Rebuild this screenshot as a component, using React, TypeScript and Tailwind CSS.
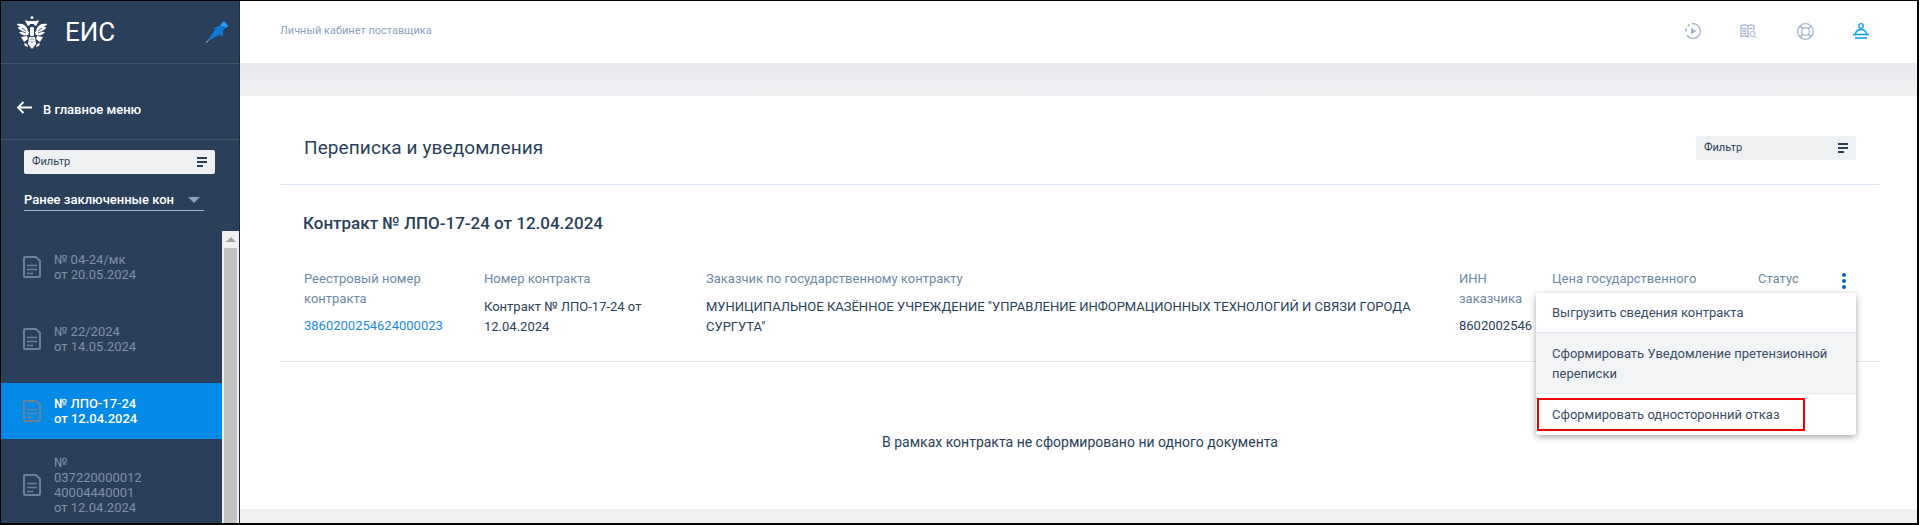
import React from "react";

const EagleLogo = () => (
  <svg width="32" height="33" viewBox="0 0 32 33" fill="#fff">
    <circle cx="16" cy="1.500" r="1.500" />
    <path d="M11 5h10l-1.500 3h-7z" />
    <path d="M1 8c4-1 8 0 10 4l2 5-1 2c-3 1-7 0-9-3 1 0 2 0 3-1-2-1-4-2-4-4 1 0 2 0 2-1-2 0-3-1-3-2z" />
    <path d="M31 8c-4-1-8 0-10 4l-2 5 1 2c3 1 7 0 9-3-1 0-2 0-3-1 2-1 4-2 4-4-1 0-2 0-2-1 2 0 3-1 3-2z" />
    <path d="M9 5c1-1 3 0 4 1l1 3-2 1zM23 5c-1-1-3 0-4 1l-1 3 2 1z" />
    <rect x="14" y="11" width="4" height="9" rx="1" />
    <path d="M5 21l6-1 1 3-4 3zM27 21l-6-1-1 3 4 3z" />
    <path d="M13 21h6l1 7-4 5-4-5z" />
    <path d="M8 27l3 1 1 3-3-1zM24 27l-3 1-1 3 3-1z" />
    <path d="M6 12l4 3M26 12l-4 3M5 15l5 2M27 15l-5 2" stroke="#2a3f5a" strokeWidth=".8" fill="none" />
    <path d="M14.500 23h3M14.500 26h3" stroke="#2a3f5a" strokeWidth=".8" fill="none" />
  </svg>
);

const PinIcon = () => (
  <svg width="22" height="22" viewBox="0 0 22 22">
    <path d="M0 22l8-9" stroke="#8ac4f2" strokeWidth="1" />
    <path d="M2 20L9 8 7 7l7-2 3-4 1-1 4 5-1 1-4 3 0 7-3-2-3 1z" fill="#0f78d4" />
    <path d="M14 5l3-4 1-1 4 5-1 1-4-1z" fill="#2f9bec" />
  </svg>
);

const LinesIcon = () => (
  <div className="flex flex-col gap-[2px]">
    <div className="h-[2px] w-[10px] bg-[#2a3f5a]" />
    <div className="h-[2px] w-[10px] bg-[#2a3f5a]" />
    <div className="h-[2px] w-[6px] bg-[#2a3f5a]" />
  </div>
);

const DocIcon = () => (
  <svg width="18" height="22" viewBox="0 0 18 22" fill="none" stroke="#6b7f99" strokeWidth="2" className="shrink-0">
    <path d="M13 1H2a1 1 0 0 0-1 1v18a1 1 0 0 0 1 1h14a1 1 0 0 0 1-1V5z" />
    <path d="M4 9.500h10M4 13.500h10M4 17.500h6" strokeWidth="1.600" />
  </svg>
);

const contracts = [
  { lines: ["№ 04-24/мк", "от 20.05.2024"] },
  { lines: ["№ 22/2024", "от 14.05.2024"] },
  { lines: ["№ ЛПО-17-24", "от 12.04.2024"], active: true },
  { lines: ["№", "037220000012", "40004440001", "от 12.04.2024"] },
];

const Sidebar = () => (
  <div className="w-[239px] shrink-0 bg-[#2a3f5a] flex flex-col overflow-hidden">
    <div className="h-[63px] shrink-0 border-b border-[#43566f] flex items-center pl-[15px] pr-[12px]">
      <EagleLogo />
      <div className="ml-[17px] text-[26px] text-white leading-none flex-1">ЕИС</div>
      <PinIcon />
    </div>
    <div className="h-[76px] shrink-0 border-b border-[#43566f] flex items-center pl-[15px] pt-[16px]">
      <svg width="16" height="13" viewBox="0 0 16 13" fill="none" stroke="#fff" strokeWidth="1.800" className="mb-[4px]">
        <path d="M16 6.500H2M7.500 1L2 6.500 7.500 12" />
      </svg>
      <span className="ml-[11px] text-[13px] font-medium text-white">В главное меню</span>
    </div>
    <div className="shrink-0 pl-[23px] pt-[10px]">
      <div className="w-[191px] h-[24px] rounded-[2px] bg-[#eff0f2] flex items-center justify-between pl-[8px] pr-[8px]">
        <span className="text-[11px] text-[#2a3f5a]">Фильтр</span>
        <LinesIcon />
      </div>
      <div className="mt-[12px] w-[180px] h-[25px] pt-[3px] border-b border-[#a9b8cb] flex items-center justify-between pr-[4px]">
        <span className="text-[13px] font-medium text-white whitespace-nowrap">Ранее заключенные кон</span>
        <div className="w-0 h-0 border-x-[6px] border-x-transparent border-t-[6px] border-t-[#8fa0b6]" />
      </div>
    </div>
    <div className="flex-1 min-h-0 mt-[20px] flex overflow-hidden pr-[1px]">
      <div className="flex-1 pt-[8px] flex flex-col gap-[16px]">
        {contracts.map((c, i) => (
          <div key={i} className={`min-h-[56px] shrink-0 flex items-center pl-[22px] ${c.active ? "bg-[#028ae6]" : ""}`}>
            <DocIcon />
            <div className={`ml-[13px] text-[13px] leading-[15px] ${c.active ? "text-white font-medium" : "text-[#7e91a9]"}`}>
              {c.lines.map((l) => (
                <div key={l}>{l}</div>
              ))}
            </div>
          </div>
        ))}
      </div>
      <div className="w-[17px] shrink-0 bg-[#f1f1f1] flex flex-col items-center">
        <div className="h-[17px] flex items-center justify-center">
          <div className="w-0 h-0 border-x-[5px] border-x-transparent border-b-[5px] border-b-[#a3a3a3]" />
        </div>
        <div className="flex-1 w-[13px] bg-[#c1c1c1]" />
      </div>
    </div>
  </div>
);

const TopBar = () => (
  <div className="h-[62px] shrink-0 bg-white flex items-center pl-[40px] pr-[48px] pb-[2px] justify-between">
    <span className="text-[11px] text-[#8ea2c0]">Личный кабинет поставщика</span>
    <div className="flex items-center gap-[40px]">
      <svg width="16" height="16" viewBox="0 0 16 16" fill="none" stroke="#a6b5cf" strokeWidth="1.500">
        <path d="M7 .8a7.300 7.300 0 1 1-5 11.400" />
        <path d="M.8 8.500a7 7 0 0 1 .7-3.500M2.800 3a7 7 0 0 1 2-1.500" />
        <path d="M6 4.500v7L11.500 8z" fill="#a6b5cf" stroke="none" />
      </svg>
      <div className="w-[16px] flex justify-center">
        <svg width="18" height="15" viewBox="0 0 18 15" fill="none" stroke="#a6b5cf" strokeWidth="1.300" className="shrink-0">
          <path d="M1 1.500c2-.8 5-.8 7 .5v11c-2-1.300-5-1.300-7-.5zM8 2c2-1.300 4-1.300 6-.5v5" />
          <path d="M2.500 4.500h4M2.500 7h4M2.500 9.500h4M9.500 4.500h3" />
          <circle cx="12.500" cy="10" r="2.600" strokeWidth="1" />
          <path d="M14.500 12l2.500 2.500" strokeWidth="1" />
        </svg>
      </div>
      <div className="w-[16px] flex justify-center">
        <svg width="17" height="17" viewBox="0 0 17 17" fill="none" stroke="#a6b5cf" strokeWidth="1.200" className="shrink-0">
          <circle cx="8.500" cy="8.500" r="7.800" />
          <circle cx="8.500" cy="8.500" r="3.800" />
          <path d="M3 3l3 3M14 3l-3 3M3 14l3-3M14 14l-3-3" strokeWidth="1.600" />
        </svg>
      </div>
      <svg width="16" height="16" viewBox="0 0 16 16" fill="none" stroke="#0a9af2" strokeWidth="1.300">
        <circle cx="8" cy="3" r="2.300" />
        <path d="M2.500 11c.5-3 2.500-4.500 5.500-4.500s5 1.500 5.500 4.500" />
        <path d="M0 11.500h16M2 15h12" />
      </svg>
    </div>
  </div>
);

const Contract = () => (
  <div className="relative mt-[34px] text-[13px] leading-[20px]">
    <div className="flex px-[24px] pb-[24px] border-b border-[#e3e9f3]">
      <div className="w-[180px] shrink-0 pt-[2px]">
        <div className="w-[130px] text-[#6e8aa6]">Реестровый номер контракта</div>
        <a className="mt-[7px] block text-[#1e8ae6]">3860200254624000023</a>
      </div>
      <div className="w-[222px] shrink-0 pt-[2px]">
        <div className="text-[#6e8aa6]">Номер контракта</div>
        <div className="mt-[8px] w-[170px] text-[#2a3f5a]">Контракт № ЛПО-17-24 от 12.04.2024</div>
      </div>
      <div className="w-[753px] shrink-0 pt-[2px]">
        <div className="text-[#6e8aa6]">Заказчик по государственному контракту</div>
        <div className="mt-[8px] w-[730px] text-[#2a3f5a]">
          МУНИЦИПАЛЬНОЕ КАЗЁННОЕ УЧРЕЖДЕНИЕ "УПРАВЛЕНИЕ ИНФОРМАЦИОННЫХ ТЕХНОЛОГИЙ И СВЯЗИ ГОРОДА СУРГУТА"
        </div>
      </div>
      <div className="w-[93px] shrink-0 pt-[2px]">
        <div className="w-[70px] text-[#6e8aa6]">ИНН заказчика</div>
        <div className="mt-[7px] text-[#2a3f5a]">8602002546</div>
      </div>
      <div className="w-[206px] shrink-0 pt-[2px] text-[#6e8aa6]">Цена государственного</div>
      <div className="w-[84px] shrink-0 pt-[2px] text-[#6e8aa6]">Статус</div>
      <div className="flex flex-col gap-[2px] pt-[6px]">
        <div className="w-[4px] h-[4px] rounded-full bg-[#0a66c8]" />
        <div className="w-[4px] h-[4px] rounded-full bg-[#0a66c8]" />
        <div className="w-[4px] h-[4px] rounded-full bg-[#0a66c8]" />
      </div>
    </div>
    <div className="absolute top-[26px] right-[24px] w-[320px] bg-white rounded-[3px] shadow-[0_2px_6px_rgba(0,0,0,0.35)] text-[#3a4d66]">
      <div className="h-[40px] px-[16px] flex items-center border-b border-[#e3e9f3]">Выгрузить сведения контракта</div>
      <div className="h-[61px] px-[16px] pt-[1px] flex items-center bg-[#f3f4f6] border-b border-[#e3e9f3]">
        Сформировать Уведомление претензионной переписки
      </div>
      <div className="h-[41px] flex items-center pl-[1px] pr-[51px]">
        <div className="flex-1 h-[33px] border-2 border-[#f00000] pl-[13px] flex items-center">Сформировать односторонний отказ</div>
      </div>
    </div>
  </div>
);

export default function App() {
  return (
    <div className="h-[525px] w-[1920px] bg-white overflow-hidden font-['Roboto',sans-serif]">
      <div className="h-[525px] w-[1919px] border-t border-l border-r-2 border-b-2 border-black flex overflow-hidden">
        <Sidebar />
        <div className="flex-1 min-w-0 flex flex-col bg-[#eff0f2] border-l border-[#1b2a40] -ml-[1px]">
          <TopBar />
          <div className="h-[33px] shrink-0 bg-gradient-to-b from-[#e9eaed] to-[#eff0f2]" />
          <div className="h-[413px] shrink-0 bg-white pl-[40px] pr-[37px]">
            <div className="h-[89px] border-b border-[#dbe9f8] flex items-center justify-between px-[24px] pt-[16px]">
              <h1 className="text-[19px] text-[#2a3f5a] font-normal tracking-[0.1px]">Переписка и уведомления</h1>
              <div className="w-[160px] h-[24px] rounded-[2px] bg-[#eff0f2] flex items-center justify-between pl-[8px] pr-[8px]">
                <span className="text-[11px] text-[#2a3f5a]">Фильтр</span>
                <LinesIcon />
              </div>
            </div>
            <div className="mt-[28px] pl-[23px] text-[17px] font-medium text-[#2a3f5a] leading-[20px]">Контракт № ЛПО-17-24 от 12.04.2024</div>
            <Contract />
            <div className="mt-[70px] text-center text-[14px] leading-[20px] text-[#2a3f5a]">В рамках контракта не сформировано ни одного документа</div>
          </div>
        </div>
      </div>
    </div>
  );
}
